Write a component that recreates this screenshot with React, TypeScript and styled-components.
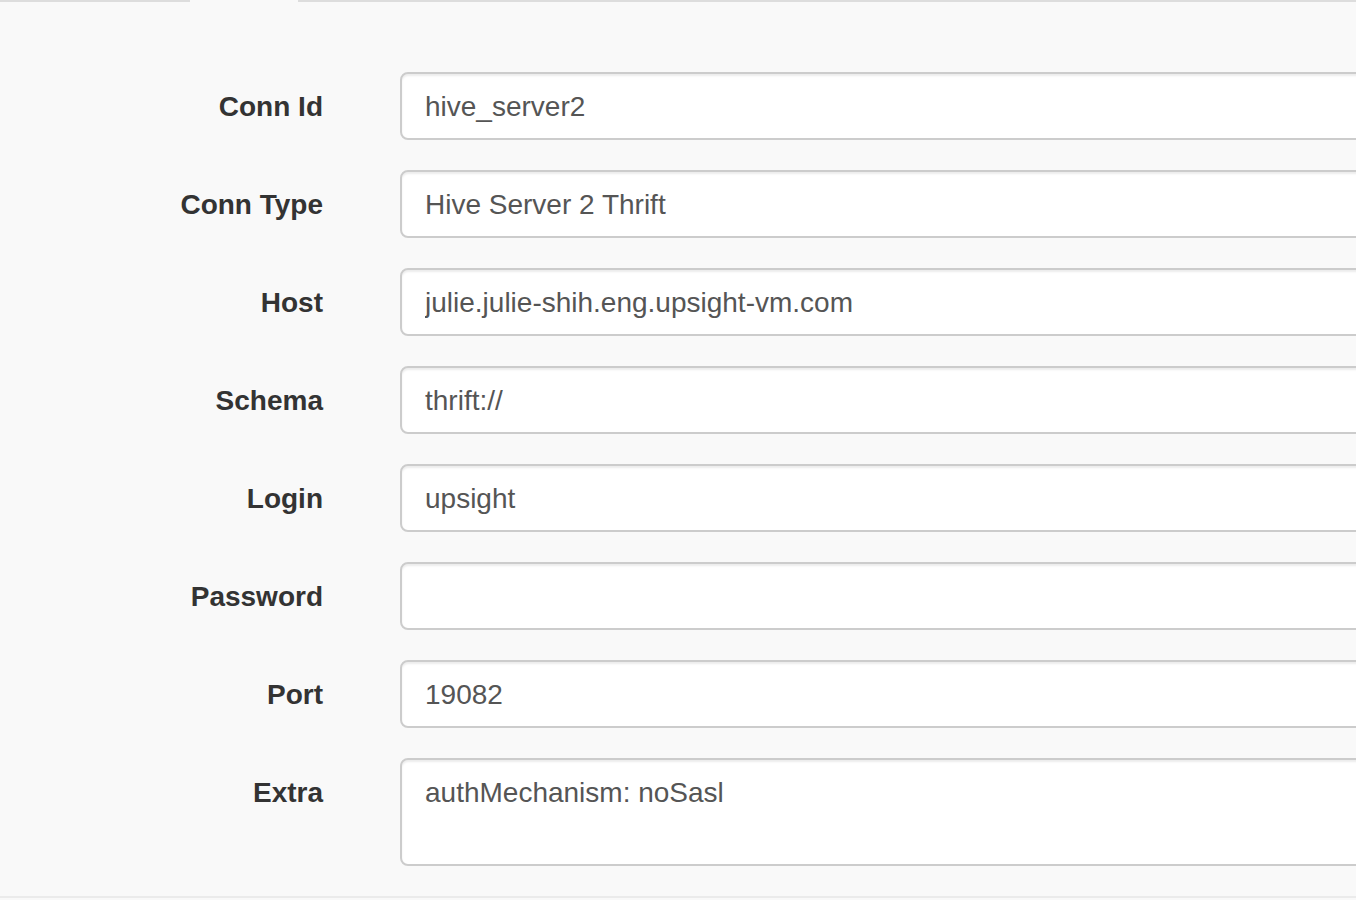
import styled, { createGlobalStyle } from "styled-components";

const GlobalStyle = createGlobalStyle`
	html, body {
		margin: 0;
		padding: 0;
		background: #f9f9f9;
		overflow: hidden;
	}
	body {
		font-family: "Liberation Sans", Arial, Helvetica, sans-serif;
		font-size: 28px;
		color: #333;
	}
`;

const fields = [
	{ label: "Conn Id", value: "hive_server2" },
	{ label: "Conn Type", value: "Hive Server 2 Thrift" },
	{ label: "Host", value: "julie.julie-shih.eng.upsight-vm.com" },
	{ label: "Schema", value: "thrift://" },
	{ label: "Login", value: "upsight" },
	{ label: "Password", value: "", password: true },
	{ label: "Port", value: "19082" },
];

export default function App() {
	return (
		<Page>
			<GlobalStyle />
			<Tabs>
				<TabLine $width="190px" />
				<ActiveTab />
				<TabLine $grow />
			</Tabs>

			<Form>
				{fields.map((f) => (
					<Row key={f.label}>
						<Label>{f.label}</Label>
						<Input
							type={f.password ? "password" : "text"}
							defaultValue={f.value}
							readOnly
						/>
					</Row>
				))}
				<Row>
					<Label>Extra</Label>
					<TextArea defaultValue="authMechanism: noSasl" readOnly />
				</Row>
			</Form>
		</Page>
	);
}

const Page = styled.div`
	width: 100%;
	min-height: 900px;
	background: #f9f9f9;
`;

const Tabs = styled.div`
	display: flex;
	height: 2px;
`;

const TabLine = styled.div<{ $width?: string; $grow?: boolean }>`
	width: ${(p) => p.$width || "auto"};
	flex: ${(p) => (p.$grow ? 1 : "none")};
	border-bottom: 2px solid #ddd;
`;

const ActiveTab = styled.div`
	width: 108px;
`;

const Form = styled.div`
	padding-top: 70px;
	border-bottom: 2px solid #ebebeb;
`;

const Row = styled.div`
	display: grid;
	grid-template-columns: 323px 1fr;
	column-gap: 77px;
	margin-bottom: 30px;
`;

const Label = styled.label`
	text-align: right;
	font-weight: bold;
	padding-top: 15px;
	line-height: 40px;
	color: #333;
`;

const Input = styled.input`
	box-sizing: border-box;
	width: calc(100% + 40px);
	height: 68px;
	padding: 13px 23px 11px;
	border: 2px solid #ccc;
	border-radius: 8px;
	background: #fff;
	font-family: inherit;
	font-size: 28px;
	line-height: 40px;
	color: #555;
	outline: none;
	box-shadow: inset 0 2px 2px rgba(0, 0, 0, 0.075);
`;

const TextArea = styled.textarea`
	box-sizing: border-box;
	width: calc(100% + 40px);
	height: 108px;
	padding: 13px 23px 11px;
	border: 2px solid #ccc;
	border-radius: 8px;
	background: #fff;
	font-family: inherit;
	font-size: 28px;
	line-height: 40px;
	color: #555;
	resize: none;
	outline: none;
	display: block;
	box-shadow: inset 0 2px 2px rgba(0, 0, 0, 0.075);
`;
